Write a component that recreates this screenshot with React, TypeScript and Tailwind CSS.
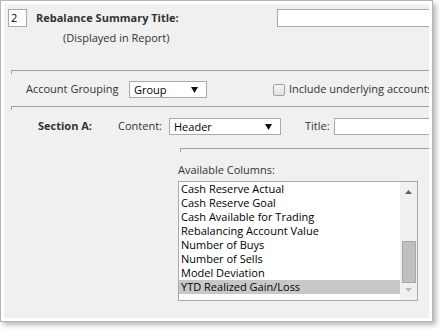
import React from "react";

// Rebalance summary settings panel: framed dialog-like page with title inputs,
// account grouping row, section content row and an "Available Columns" listbox.

const font = { fontFamily: '"Open Sans", "Noto Sans", sans-serif' };

const columns = [
  "Cash Reserve Actual",
  "Cash Reserve Goal",
  "Cash Available for Trading",
  "Rebalancing Account Value",
  "Number of Buys",
  "Number of Sells",
  "Model Deviation",
  "YTD Realized Gain/Loss",
];

function Caret() {
  return (
    <svg width="7" height="6" viewBox="0 0 7 6" className="shrink-0">
      <path d="M0 0h7L3.5 6z" fill="#111" />
    </svg>
  );
}

function Select({ value, width }: { value: string; width: string }) {
  return (
    <div
      className={`flex h-[17px] shrink-0 items-center justify-between border border-[#a9a9a9] bg-white pl-[4px] pr-[8px] text-[11px] leading-none text-black ${width}`}
    >
      <span>{value}</span>
      <Caret />
    </div>
  );
}

function Rule({ left }: { left: string }) {
  return <div className={`h-[4px] border-l border-t border-[#a0a0a0] ${left}`} />;
}

export default function App() {
  return (
    <div className="h-[331px] w-[442px] bg-white" style={font}>
      <div className="h-[322px] w-[433px] border border-[#b4b4b4] bg-white p-[3px] shadow-[3px_3px_5px_rgba(0,0,0,0.28)]">
        <div className="h-full w-full overflow-hidden bg-[#f0f0f0] text-[11px] text-[#333]">
          {/* Summary title */}
          <div className="mt-[5px] flex h-[18px] w-[460px]">
            <div className="flex w-[273px] shrink-0">
              <div className="ml-[4px] flex h-[18px] w-[19px] items-center border border-[#a9a9a9] bg-white pl-[2px] text-black">
                2
              </div>
              <span className="ml-[9px] text-[11px] font-bold leading-[18px]">
                Rebalance Summary Title:
              </span>
            </div>
            <div className="h-[18px] w-[180px] shrink-0 border border-[#a9a9a9] bg-white" />
          </div>
          <div className="mt-[3px] pl-[59px] leading-[16px]">(Displayed in Report)</div>

          <Rule left="ml-[7px] mt-[24px]" />

          {/* Account grouping */}
          <div className="mt-[7px] flex h-[17px] w-[460px] items-center">
            <span className="ml-[22px] w-[103px] shrink-0">Account Grouping</span>
            <Select value="Group" width="w-[78px]" />
            <div className="ml-[66px] flex shrink-0 items-center">
              <span className="h-[12px] w-[12px] rounded-[2px] border border-[#a0a0a0] bg-gradient-to-b from-[#f4f4f4] to-[#e2e2e2]" />
              <span className="ml-[4px] whitespace-nowrap">Include underlying accounts</span>
            </div>
          </div>

          <Rule left="ml-[7px] mt-[8px]" />

          {/* Section A */}
          <div className="mt-[8px] flex h-[17px] w-[460px] items-center">
            <span className="ml-[34px] w-[80px] shrink-0 font-bold">Section A:</span>
            <span className="w-[51px] shrink-0">Content:</span>
            <Select value="Header" width="w-[112px]" />
            <span className="ml-[24px] w-[29px] shrink-0">Title:</span>
            <div className="h-[17px] w-[120px] shrink-0 border border-[#a9a9a9] bg-white" />
          </div>

          <Rule left="ml-[176px] mt-[13px]" />

          {/* Available columns */}
          <div className="ml-[174px] mt-[10px] leading-[16px]">Available Columns:</div>
          <div className="ml-[174px] mt-[3px] flex h-[120px] w-[240px] border border-[#a9a9a9] bg-white">
            <div className="flex-1">
              {columns.map((c, i) => (
                <div
                  key={c}
                  className={`h-[14px] pl-[2px] leading-[14px] text-black ${i === columns.length - 1 ? "bg-[#c8c8c8]" : ""}`}
                >
                  {c}
                </div>
              ))}
            </div>
            <div className="flex w-[17px] flex-col items-center bg-[#f0f0f0]">
              <svg width="7" height="4" viewBox="0 0 7 4" className="mt-[8px]">
                <path d="M0 4h7L3.5 0z" fill="#606060" />
              </svg>
              <div className="mt-[47px] h-[42px] w-[14px] border border-[#a8a8a8] bg-[#c0c0c0]" />
              <svg width="7" height="4" viewBox="0 0 7 4" className="mt-[5px]">
                <path d="M0 0h7L3.5 4z" fill="#bcbcbc" />
              </svg>
            </div>
          </div>
        </div>
      </div>
    </div>
  );
}
